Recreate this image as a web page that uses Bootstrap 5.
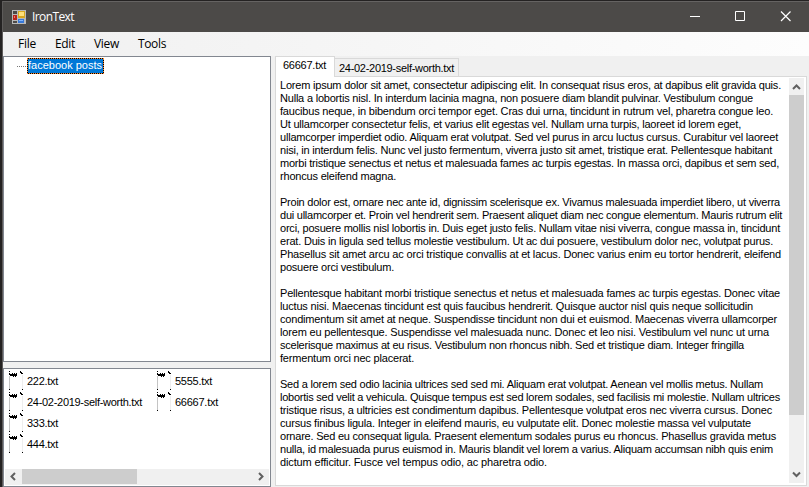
<!DOCTYPE html>
<html lang="en">
<head>
<meta charset="utf-8">
<title>IronText</title>
<link rel="stylesheet" href="https://cdn.jsdelivr.net/npm/bootstrap@5.3.0/dist/css/bootstrap.min.css">
<style>
body{width:809px;height:487px;background:#242222;font:11px/13px "Liberation Sans",Arial,sans-serif;color:#000;padding:1px 0 0 2px}
.app-window{height:486px;background:#f0f0f0;border-left:1px solid #5d5b5a}
.title-bar{height:31px;background:#4c4a48;border-top:1px solid #656362;color:#fff;font:12px "Open Sans","Noto Sans",sans-serif;padding-left:9px}
.title-bar .app-name{margin-left:6px;margin-top:-2px}
.menu-strip{height:24px;background:linear-gradient(90deg,#f0f0f0,#fdfdfd);font:12px "Open Sans","Noto Sans",sans-serif;padding:0 0 1px 15px}
.menu-file{width:37px}
.menu-edit{width:39px}
.menu-view{width:44px}
.fit{display:inline-block;white-space:pre}
.pane{background:#fff;border:1px solid #828790}
.tree-pane{height:306px;padding:1px 0 0 13px}
.tree-line{width:9px;height:1px;background:repeating-linear-gradient(90deg,#777 0 1px,#fff 1px 2px)}
.tree-node{height:16px;width:77px;margin-left:1px;background:#0078d7;color:#fff;outline:1px dotted #ff8728;outline-offset:-1px;border:1px solid #000;padding-left:0}
.file-pane{height:119px;margin-top:6px;padding:2px 1px 1px}
.file-grid{display:grid;grid-template-columns:148px 1fr;grid-template-rows:repeat(4,21px);grid-auto-flow:column;padding-left:4px}
.file-item{gap:4px}
.h-track{height:16px;background:#f0f0f0}
.h-thumb{width:115px;height:15px;background:#cdcdcd}
.work-area{height:431px}
.left-col{width:268px}
.right-col{width:532px;margin-left:4px}
.tabs-row{height:20px}
.doc-tab{border:1px solid #d9d9d9;border-bottom:0}
.doc-tab.current{width:60px;height:21px;background:#fff;padding:2px 0 0 7px;margin-bottom:-1px;position:relative}
.doc-tab.other{width:124px;height:18px;padding:3px 0 0 4px;border-left:0}
.page-frame{height:410px;background:#fff;border:1px solid #d9d9d9;padding:1px 2px 2px 4px}
#document-text{padding-top:1px}
.doc-line{height:13px}
.v-track{width:15px;height:405px;background:#f0f0f0}
.v-thumb{width:15px;height:320px;background:#cdcdcd}
svg{display:block}
</style>
<script src="https://cdn.jsdelivr.net/npm/bootstrap@5.3.0/dist/js/bootstrap.bundle.min.js"></script>
</head>
<body class="overflow-hidden">
<svg width="0" height="0" class="position-absolute"><defs>
<g id="file-icon" shape-rendering="crispEdges"><path fill="#000" d="M0 0h1v1h-1zM0 2h1v1h2v-1h1v1h1v-1h1v1h1v-1h1v3h-1v1h-1v-1h-1v1h-1v-1h-3v-1h-1zM11 0h1v1h1v1h1v1h-2v-1h-1zM13 18h1v1h-1zM0 18h1v1h-1z"/><path fill="#c4c4c4" d="M0 5h1v13h-1z"/><path fill="#eee" d="M13 4h1v14h-1z"/></g>
</defs></svg>
<main class="app-window">
<header class="title-bar d-flex align-items-center">
<svg width="14" height="14" shape-rendering="crispEdges"><path fill="#b9b9b9" d="M0 0h14v14H0z"/><path fill="#4c4a48" d="M1 1h4v3H1zM1 11h4v2H1z"/><path fill="#d9a820" d="M6 1h7v7H6z"/><path fill="#ffe17a" d="M7 2h5v4H7z"/><path fill="#b8231c" d="M1 5h4v5H1z"/><path fill="#f0746a" d="M2 6h1v2H2z"/><path fill="#3778d8" d="M6 9h6v4H6z"/><path fill="#80b5ff" d="M7 10h4v1H7z"/></svg>
<span class="app-name"><span class="fit" data-w="42">IronText</span></span>
<svg class="ms-auto" width="120" height="30" fill="none" stroke="#fff"><path d="M1 14.500h10M46.500 9.500h9v9h-9z"/><path stroke-width="1.200" d="M92 9.500l9.500 9.500M101.500 9.500l-9.500 9.500"/></svg>
</header>
<nav class="menu-strip d-flex align-items-center">
<span class="menu-file"><span class="fit" data-w="18">File</span></span><span class="menu-edit"><span class="fit" data-w="20">Edit</span></span><span class="menu-view"><span class="fit" data-w="25">View</span></span><span><span class="fit" data-w="28">Tools</span></span>
</nav>
<div class="work-area d-flex">
<section class="left-col">
<div class="pane tree-pane"><div class="d-flex align-items-center"><span class="tree-line"></span><div class="tree-node"><span class="fit" data-w="74">facebook posts</span></div></div></div>
<div class="pane file-pane d-flex flex-column">
<div class="file-grid">
<div class="file-item d-flex"><svg width="14" height="19"><use href="#file-icon"/></svg><span class="fit mt-1" data-w="31">222.txt</span></div>
<div class="file-item d-flex"><svg width="14" height="19"><use href="#file-icon"/></svg><span class="fit mt-1" data-w="115">24-02-2019-self-worth.txt</span></div>
<div class="file-item d-flex"><svg width="14" height="19"><use href="#file-icon"/></svg><span class="fit mt-1" data-w="31">333.txt</span></div>
<div class="file-item d-flex"><svg width="14" height="19"><use href="#file-icon"/></svg><span class="fit mt-1" data-w="31">444.txt</span></div>
<div class="file-item d-flex"><svg width="14" height="19"><use href="#file-icon"/></svg><span class="fit mt-1" data-w="37">5555.txt</span></div>
<div class="file-item d-flex"><svg width="14" height="19"><use href="#file-icon"/></svg><span class="fit mt-1" data-w="43">66667.txt</span></div>
</div>
<div class="h-track d-flex align-items-start mt-auto"><svg width="17" height="16" fill="none" stroke="#606060" stroke-width="2"><path d="M10 4l-3.500 3.500 3.500 3.500"/></svg><div class="h-thumb"></div><svg class="ms-auto" width="17" height="16" fill="none" stroke="#606060" stroke-width="2"><path d="M7 4l3.500 3.500-3.500 3.500"/></svg></div>
</div>
</section>
<section class="right-col">
<div class="tabs-row d-flex align-items-end"><div class="doc-tab current"><span class="fit" data-w="43">66667.txt</span></div><div class="doc-tab other"><span class="fit" data-w="115">24-02-2019-self-worth.txt</span></div></div>
<div class="page-frame d-flex justify-content-between">
<article id="document-text"></article>
<div class="v-track"><svg width="15" height="17" fill="none" stroke="#606060" stroke-width="2"><path d="M4 11l3.500-3.500 3.500 3.500"/></svg><div class="v-thumb"></div><svg width="15" height="68" fill="none" stroke="#606060" stroke-width="2"><path d="M4 57.500l3.500 3.500 3.500-3.500"/></svg></div>
</div>
</section>
</div>
</main>
<script>
const lines = [
[501,"Lorem ipsum dolor sit amet, consectetur adipiscing elit. In consequat risus eros, at dapibus elit gravida quis."],
[473,"Nulla a lobortis nisl. In interdum lacinia magna, non posuere diam blandit pulvinar. Vestibulum congue"],
[493,"faucibus neque, in bibendum orci tempor eget. Cras dui urna, tincidunt in rutrum vel, pharetra congue leo."],
[461,"Ut ullamcorper consectetur felis, et varius elit egestas vel. Nullam urna turpis, laoreet id lorem eget,"],
[498,"ullamcorper imperdiet odio. Aliquam erat volutpat. Sed vel purus in arcu luctus cursus. Curabitur vel laoreet"],
[492,"nisi, in interdum felis. Nunc vel justo fermentum, viverra justo sit amet, tristique erat. Pellentesque habitant"],
[499,"morbi tristique senectus et netus et malesuada fames ac turpis egestas. In massa orci, dapibus et sem sed,"],
[116,"rhoncus eleifend magna."],
null,
[500,"Proin dolor est, ornare nec ante id, dignissim scelerisque ex. Vivamus malesuada imperdiet libero, ut viverra"],
[502,"dui ullamcorper et. Proin vel hendrerit sem. Praesent aliquet diam nec congue elementum. Mauris rutrum elit"],
[500,"orci, posuere mollis nisl lobortis in. Duis eget justo felis. Nullam vitae nisi viverra, congue massa in, tincidunt"],
[493,"erat. Duis in ligula sed tellus molestie vestibulum. Ut ac dui posuere, vestibulum dolor nec, volutpat purus."],
[501,"Phasellus sit amet arcu ac orci tristique convallis at et lacus. Donec varius enim eu tortor hendrerit, eleifend"],
[114,"posuere orci vestibulum."],
null,
[500,"Pellentesque habitant morbi tristique senectus et netus et malesuada fames ac turpis egestas. Donec vitae"],
[473,"luctus nisi. Maecenas tincidunt est quis faucibus hendrerit. Quisque auctor nisl quis neque sollicitudin"],
[497,"condimentum sit amet at neque. Suspendisse tincidunt non dui et euismod. Maecenas viverra ullamcorper"],
[489,"lorem eu pellentesque. Suspendisse vel malesuada nunc. Donec et leo nisi. Vestibulum vel nunc ut urna"],
[464,"scelerisque maximus at eu risus. Vestibulum non rhoncus nibh. Sed et tristique diam. Integer fringilla"],
[134,"fermentum orci nec placerat."],
null,
[483,"Sed a lorem sed odio lacinia ultrices sed sed mi. Aliquam erat volutpat. Aenean vel mollis metus. Nullam"],
[500,"lobortis sed velit a vehicula. Quisque tempus est sed lorem sodales, sed facilisis mi molestie. Nullam ultrices"],
[492,"tristique risus, a ultricies est condimentum dapibus. Pellentesque volutpat eros nec viverra cursus. Donec"],
[471,"cursus finibus ligula. Integer in eleifend mauris, eu vulputate elit. Donec molestie massa vel vulputate"],
[496,"ornare. Sed eu consequat ligula. Praesent elementum sodales purus eu rhoncus. Phasellus gravida metus"],
[493,"nulla, id malesuada purus euismod in. Mauris blandit vel lorem a varius. Aliquam accumsan nibh quis enim"],
[267,"dictum efficitur. Fusce vel tempus odio, ac pharetra odio."]
];
const article = document.getElementById("document-text");
for (const line of lines) {
  const row = document.createElement("div");
  row.className = "doc-line";
  if (line) {
    const text = document.createElement("span");
    text.className = "fit";
    text.dataset.w = line[0];
    text.textContent = line[1];
    row.append(text);
  }
  article.append(row);
}
for (const el of document.querySelectorAll(".fit")) {
  const gap = (Number(el.dataset.w) - el.getBoundingClientRect().width) / el.textContent.length;
  el.style.letterSpacing = gap + "px";
}
</script>
</body>
</html>
